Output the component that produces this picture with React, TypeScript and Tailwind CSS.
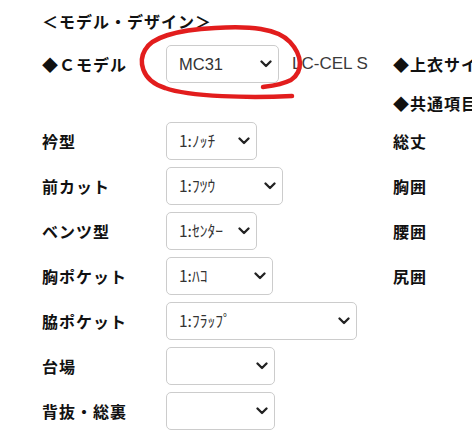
import React from "react";

const jp = { fontFamily: '"Noto Sans CJK JP", "Noto Sans", sans-serif' };

function Chevron() {
  return (
    <svg
      className="pointer-events-none absolute right-[7px] top-1/2 -translate-y-1/2"
      width="12"
      height="8"
      viewBox="0 0 12 8"
      fill="none"
    >
      <path d="M1.5 1.5 L6 6 L10.5 1.5" stroke="#222" strokeWidth="2.3" strokeLinecap="round" strokeLinejoin="round" />
    </svg>
  );
}

function Select({ width, value, latin }: { width: number; value: string; latin?: boolean }) {
  return (
    <div className="relative h-[38px] shrink-0" style={{ width }}>
      <select
        className={
          "h-full w-full appearance-none rounded-[5px] border border-[#cccccc] bg-white pl-[12px] pr-[24px] text-[#333333] outline-none " +
          (latin ? "text-[16.5px]" : "text-[15.5px]")
        }
        style={latin ? { fontFamily: '"Liberation Sans", Arial, sans-serif' } : jp}
        defaultValue={value}
      >
        <option value={value}>{value}</option>
      </select>
      <Chevron />
    </div>
  );
}

type Row = { label: string; sel: number; value: string; right?: string };

const rows: Row[] = [
  { label: "衿型", sel: 91, value: "1:ﾉｯﾁ", right: "総丈" },
  { label: "前カット", sel: 117, value: "1:ﾌﾂｳ", right: "胸囲" },
  { label: "ベンツ型", sel: 91, value: "1:ｾﾝﾀｰ", right: "腰囲" },
  { label: "胸ポケット", sel: 107, value: "1:ﾊｺ", right: "尻囲" },
  { label: "脇ポケット", sel: 191, value: "1:ﾌﾗｯﾌﾟ" },
  { label: "台場", sel: 109, value: "" },
  { label: "背抜・総裏", sel: 109, value: "" },
];

export default function App() {
  return (
    <div className="relative h-[447px] w-[472px] overflow-hidden bg-white text-[#111111]" style={jp}>
      <div className="pl-[42px] pt-[9px]">
        <div className="h-[24px] whitespace-nowrap text-[16px] font-bold leading-[24px] tracking-[1px]">
          ＜モデル・デザイン＞
        </div>
        <div className="mt-[12px] flex flex-col gap-[7px]">
          <div className="flex h-[38px] items-center whitespace-nowrap">
            <div className="w-[124px] shrink-0 text-[16px] font-bold tracking-[1px]">◆Ｃモデル</div>
            <div className="flex w-[227px] shrink-0 items-center">
              <Select width={113} value="MC31" latin />
              <span
                className="ml-[13px] text-[17px] text-[#3a3a3a]"
                style={{ fontFamily: '"Liberation Sans", Arial, sans-serif' }}
              >
                LC-CEL S
              </span>
            </div>
            <div className="shrink-0 text-[16px] font-bold tracking-[1px]">◆上衣サイズ</div>
          </div>
          <div className="flex h-[25px] items-center whitespace-nowrap">
            <div className="w-[124px] shrink-0" />
            <div className="w-[227px] shrink-0" />
            <div className="shrink-0 text-[16px] font-bold tracking-[1px]">◆共通項目</div>
          </div>
          {rows.map((r) => (
            <div key={r.label} className="flex h-[38px] items-center whitespace-nowrap">
              <div className="w-[124px] shrink-0 text-[16px] font-bold tracking-[1px]">{r.label}</div>
              <div className="w-[227px] shrink-0">
                <Select width={r.sel} value={r.value} />
              </div>
              {r.right && <div className="shrink-0 text-[16px] font-bold tracking-[1px]">{r.right}</div>}
            </div>
          ))}
        </div>
      </div>
      <svg
        className="pointer-events-none absolute left-0 top-0"
        width="472"
        height="447"
        viewBox="0 0 472 447"
        fill="none"
      >
        <path
          d="M292 96 C250 98, 190 97, 165 88 C140 80, 139 60, 145 50 C151 38, 175 30, 215 28 C250 26, 277 28, 290 42 C302 55, 304 71, 291 80 C281 85, 271 86, 263 87"
          stroke="#e21d1d"
          strokeWidth="4.5"
          strokeLinecap="round"
          strokeLinejoin="round"
        />
      </svg>
    </div>
  );
}
